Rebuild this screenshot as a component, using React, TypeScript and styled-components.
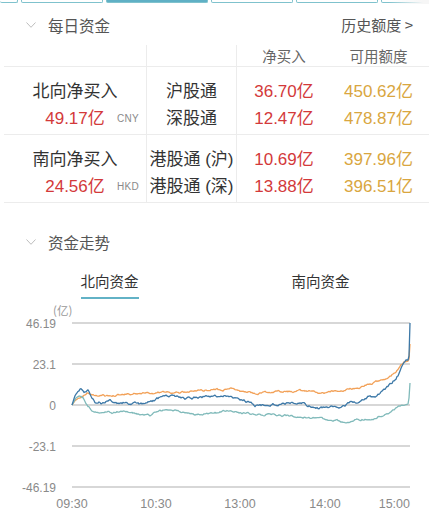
import React from 'react';
import styled, { createGlobalStyle } from 'styled-components';

const GlobalStyle = createGlobalStyle`
  html, body {
    margin: 0;
    padding: 0;
    background: #fff;
  }
  body {
    font-family: "Liberation Sans", "Noto Sans CJK SC", sans-serif;
    color: #333;
    -webkit-font-smoothing: antialiased;
  }
`;

const RED = '#d3393a';
const GOLD = '#d9a640';
const TEAL = '#62b2c6';

const Page = styled.div`
  width: 429px;
  height: 516px;
  overflow: hidden;
`;

const Strip = styled.div`
  position: relative;
  height: 4px;
  display: flex;
  gap: 3px;
  overflow: hidden;
`;

const StripButton = styled.div<{ $w: number; $active?: boolean; $cut?: boolean }>`
  flex: 0 0 ${(p) => p.$w}px;
  height: 3px;
  box-sizing: border-box;
  border: 1px solid #7fc2cd;
  border-top: none;
  border-left: ${(p) => (p.$cut ? 'none' : '1px solid #7fc2cd')};
  border-radius: 0 0 2px 2px;
  background: ${(p) => (p.$active ? '#5fb0c5' : '#fff')};
`;

const StripFade = styled.div`
  position: absolute;
  right: 0;
  top: 0;
  width: 40px;
  height: 4px;
  background: linear-gradient(90deg, rgba(255, 255, 255, 0), #f6f6f6 85%);
`;

const SectionHeader = styled.div<{ $top?: number }>`
  height: 41px;
  margin-top: ${(p) => p.$top || 0}px;
  display: flex;
  align-items: center;
  padding: 0 16px 0 26px;
`;

const Chevron = styled.svg`
  width: 10px;
  height: 6px;
  margin-right: 12px;
`;

const SectionTitle = styled.div`
  font-family: "Noto Sans CJK SC", sans-serif;
  font-size: 15.5px;
  color: #555;
  flex: 1;
`;

const HeaderLink = styled.div`
  font-family: "Noto Sans CJK SC", sans-serif;
  font-size: 15px;
  color: #555;
`;

const Table = styled.div`
  margin-left: 4px;
`;

const Row = styled.div`
  display: grid;
  grid-template-columns: 142px 90px 1fr 1fr;
  border-bottom: 1px solid #ececec;
  padding-right: 3px;
`;

const Cell = styled.div<{ $divider?: boolean; $head?: boolean }>`
  display: flex;
  flex-direction: column;
  align-items: center;
  border-left: ${(p) => (p.$divider ? '1px solid #ececec' : 'none')};
  padding: ${(p) => (p.$head ? '1px 0 0 0' : '11px 0 2px 0')};
  height: ${(p) => (p.$head ? '20px' : 'auto')};
`;

const HeadText = styled.div`
  font-family: "Noto Sans CJK SC", sans-serif;
  font-size: 14.5px;
  line-height: 20px;
  color: #666;
`;

const Line = styled.div<{ $color?: string }>`
  height: 27px;
  line-height: 27px;
  font-size: 17px;
  color: ${(p) => p.$color || '#333'};
  white-space: nowrap;
`;

const ValueLine = styled.div`
  width: 100%;
  height: 27px;
  display: grid;
  grid-template-columns: 1fr auto 1fr;
  align-items: center;
`;

const Currency = styled.span`
  justify-self: end;
  padding-right: 7px;
  font-size: 10px;
  color: #8a8a8a;
  letter-spacing: 0.3px;
`;

const Tabs = styled.div`
  display: flex;
  padding: 9px 3px 0 4px;
`;

const Tab = styled.div`
  flex: 1;
  display: flex;
  justify-content: center;
`;

const TabLabel = styled.div<{ $active?: boolean }>`
  font-family: "Noto Sans CJK SC", sans-serif;
  font-size: 14.5px;
  line-height: 20px;
  color: #333;
  padding-bottom: 6px;
  border-bottom: 2px solid ${(p) => (p.$active ? TEAL : 'transparent')};
`;

const ChartSvg = styled.svg`
  display: block;
  width: 429px;
  height: 215px;
`;

type Pt = [number, number];

const orangeKeys: Pt[] = [
  [72, 407], [76, 401], [80, 400], [84, 397], [87, 395], [90, 397], [95, 398], [100, 397],
  [110, 398], [120, 397], [150, 395], [180, 394], [210, 392], [230, 391], [245, 394],
  [255, 396], [270, 394], [290, 393], [305, 393], [320, 395], [335, 394], [345, 392],
  [360, 389], [370, 386], [380, 383], [390, 378], [396, 374], [400, 369], [404, 364],
  [408, 363], [409, 361], [410, 346],
];

const blueKeys: Pt[] = [
  [72, 407], [75, 398], [78, 393], [81, 391], [84, 396], [86, 395], [88, 392], [91, 398],
  [95, 404], [100, 404], [105, 406], [110, 403], [115, 406], [125, 405], [140, 406],
  [150, 404], [160, 400], [165, 397], [175, 399], [185, 401], [200, 399], [215, 398],
  [228, 397], [235, 401], [250, 404], [255, 407], [270, 407], [285, 406], [300, 405],
  [310, 408], [318, 410], [325, 409], [335, 408], [345, 409], [350, 405], [360, 403],
  [368, 399], [375, 400], [380, 396], [385, 392], [390, 387], [395, 381], [400, 374],
  [403, 366], [406, 362], [408, 362], [409, 358], [410, 325],
];

const tealKeys: Pt[] = [
  [72, 407], [76, 401], [79, 399], [83, 401], [88, 408], [93, 413], [98, 416], [103, 416],
  [108, 413], [113, 415], [125, 414], [140, 416], [150, 417], [160, 413], [170, 411],
  [180, 413], [190, 416], [200, 417], [215, 415], [230, 412], [245, 415], [260, 416],
  [280, 417], [300, 419], [320, 421], [335, 423], [345, 424], [355, 422], [365, 421],
  [370, 423], [378, 419], [385, 417], [393, 413], [400, 409], [405, 407], [408, 406],
  [409, 400], [410, 385],
];

function rng(seed: number) {
  return () => {
    seed = (seed + 0x6d2b79f5) | 0;
    let t = Math.imul(seed ^ (seed >>> 15), 1 | seed);
    t = (t + Math.imul(t ^ (t >>> 7), 61 | t)) ^ t;
    return ((t ^ (t >>> 14)) >>> 0) / 4294967296;
  };
}

function interp(keys: Pt[], x: number) {
  for (let i = 1; i < keys.length; i++) {
    const [x1, y1] = keys[i];
    const [x0, y0] = keys[i - 1];
    if (x <= x1) return y0 + ((y1 - y0) * (x - x0)) / (x1 - x0 || 1);
  }
  return keys[keys.length - 1][1];
}

function buildPath(keys: Pt[], seed: number, amp: number) {
  const r = rng(seed);
  let n = 0;
  const pts: string[] = [];
  for (let x = 72; x <= 409; x += 1) {
    n = n * 0.75 + (r() - 0.5) * amp;
    const fade = Math.max(0, Math.min(1, (x - 72) / 4, (405 - x) / 4));
    pts.push(`${x},${(interp(keys, x) + n * fade).toFixed(2)}`);
  }
  pts.push(`410,${keys[keys.length - 1][1]}`);
  return 'M' + pts.join(' L');
}

const gridY = [325, 366, 407, 448, 489];
const yLabels = ['46.19', '23.1', '0', '-23.1', '-46.19'];
const xLabels: [string, number, 'middle' | 'end'][] = [
  ['09:30', 72, 'middle'],
  ['10:30', 156, 'middle'],
  ['13:00', 240, 'middle'],
  ['14:00', 325, 'middle'],
  ['15:00', 410, 'end'],
];

const Chart: React.FC = () => {
  const orange = buildPath(orangeKeys, 11, 1.6);
  const teal = buildPath(tealKeys, 29, 1.6);
  const blue = buildPath(blueKeys, 47, 2);
  return (
    <ChartSvg viewBox="0 301 429 215">
      <text x={53} y={317} fontSize={11.5} fill="#999" fontFamily="Noto Sans CJK SC, sans-serif">
        (亿)
      </text>
      {gridY.map((y) => (
        <line key={y} x1={72} x2={410} y1={y} y2={y} stroke="#cacaca" strokeWidth={1.5} />
      ))}
      {gridY.map((y, i) => (
        <text
          key={'l' + y}
          x={56}
          y={y + 4.5}
          textAnchor="end"
          fontSize={12}
          fill="#8a8a8a"
          fontFamily="Liberation Sans, sans-serif"
        >
          {yLabels[i]}
        </text>
      ))}
      {xLabels.map(([t, x, a]) => (
        <text
          key={t}
          x={x}
          y={510}
          textAnchor={a}
          fontSize={12.5}
          fill="#8a8a8a"
          fontFamily="Liberation Sans, sans-serif"
        >
          {t}
        </text>
      ))}
      <path d={orange} fill="none" stroke="#f2a158" strokeWidth={1.3} strokeLinejoin="round" />
      <path d={teal} fill="none" stroke="#80baba" strokeWidth={1.3} strokeLinejoin="round" />
      <path d={blue} fill="none" stroke="#3c78a7" strokeWidth={1.3} strokeLinejoin="round" />
    </ChartSvg>
  );
};

const ChevronIcon = () => (
  <Chevron viewBox="0 0 10 6">
    <polyline points="0.5,0.5 5,5.3 9.5,0.5" fill="none" stroke="#bdbdbd" strokeWidth={1} />
  </Chevron>
);

const groups = [
  {
    label: '北向净买入',
    total: '49.17亿',
    cur: 'CNY',
    rows: [
      ['沪股通', '36.70亿', '450.62亿'],
      ['深股通', '12.47亿', '478.87亿'],
    ],
  },
  {
    label: '南向净买入',
    total: '24.56亿',
    cur: 'HKD',
    rows: [
      ['港股通 (沪)', '10.69亿', '397.96亿'],
      ['港股通 (深)', '13.88亿', '396.51亿'],
    ],
  },
];

const App: React.FC = () => (
  <Page>
    <GlobalStyle />
    <Strip>
      <StripButton $w={18} $cut />
      <StripButton $w={82} />
      <StripButton $w={102} $active />
      <StripButton $w={82} />
      <StripButton $w={82} />
      <StripButton $w={60} />
      <StripFade />
    </Strip>

    <SectionHeader>
      <ChevronIcon />
      <SectionTitle>每日资金</SectionTitle>
      <HeaderLink>历史额度 &gt;</HeaderLink>
    </SectionHeader>

    <Table>
      <Row>
        <Cell $head />
        <Cell $head $divider />
        <Cell $head $divider>
          <HeadText>净买入</HeadText>
        </Cell>
        <Cell $head>
          <HeadText>可用额度</HeadText>
        </Cell>
      </Row>
      {groups.map((g) => (
        <Row key={g.label}>
          <Cell>
            <Line>{g.label}</Line>
            <ValueLine>
              <span />
              <Line $color={RED}>{g.total}</Line>
              <Currency>{g.cur}</Currency>
            </ValueLine>
          </Cell>
          <Cell $divider>
            {g.rows.map((r) => (
              <Line key={r[0]}>{r[0]}</Line>
            ))}
          </Cell>
          <Cell $divider>
            {g.rows.map((r) => (
              <Line key={r[1]} $color={RED}>
                {r[1]}
              </Line>
            ))}
          </Cell>
          <Cell>
            {g.rows.map((r) => (
              <Line key={r[2]} $color={GOLD}>
                {r[2]}
              </Line>
            ))}
          </Cell>
        </Row>
      ))}
    </Table>

    <SectionHeader $top={18}>
      <ChevronIcon />
      <SectionTitle>资金走势</SectionTitle>
    </SectionHeader>

    <Tabs>
      <Tab>
        <TabLabel $active>北向资金</TabLabel>
      </Tab>
      <Tab>
        <TabLabel>南向资金</TabLabel>
      </Tab>
    </Tabs>

    <Chart />
  </Page>
);

export default App;
